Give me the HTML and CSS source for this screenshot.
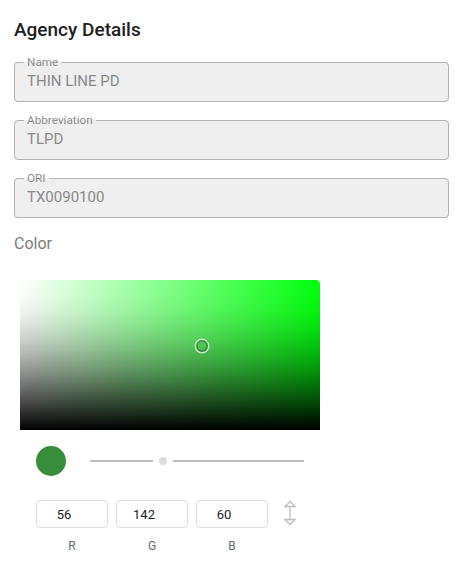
FILE: index.html
```html
<!DOCTYPE html>
<html lang="en">
<head>
<meta charset="utf-8">
<title>Agency Details</title>
<link rel="stylesheet" href="styles.css">
</head>
<body>
<div class="page">
  <h2 class="title">Agency Details</h2>

  <fieldset class="field">
    <legend class="field-label">Name</legend>
    <div class="field-value">THIN LINE PD</div>
  </fieldset>
  <fieldset class="field">
    <legend class="field-label">Abbreviation</legend>
    <div class="field-value">TLPD</div>
  </fieldset>
  <fieldset class="field">
    <legend class="field-label">ORI</legend>
    <div class="field-value">TX0090100</div>
  </fieldset>

  <div class="color-label">Color</div>

  <div class="picker">
    <div class="canvas">
      <span class="canvas-dot" style="left:60.6%;top:44.3%"></span>
    </div>
    <div class="controls">
      <div class="preview-row">
        <span class="swatch"></span>
        <div class="hue-slider">
          <span class="track track-left"></span>
          <span class="thumb"></span>
          <span class="track track-right"></span>
        </div>
      </div>
      <div class="edit-row">
        <div class="channel">
          <div class="channel-input">56</div>
          <span class="channel-name">R</span>
        </div>
        <div class="channel">
          <div class="channel-input">142</div>
          <span class="channel-name">G</span>
        </div>
        <div class="channel">
          <div class="channel-input">60</div>
          <span class="channel-name">B</span>
        </div>
        <svg class="mode-icon" width="12" height="26" viewBox="0 0 12 26" aria-hidden="true">
          <path d="M6 1.5 L11 6.5 L1 6.5 Z" fill="none" stroke="#bdbdbd" stroke-width="1.3" stroke-linejoin="miter"/>
          <path d="M6 6.5 V19.5" stroke="#bdbdbd" stroke-width="1.3"/>
          <path d="M1 19.5 L11 19.5 L6 24.5 Z" fill="none" stroke="#bdbdbd" stroke-width="1.3" stroke-linejoin="miter"/>
        </svg>
      </div>
    </div>
  </div>
</div>
</body>
</html>
```

FILE: styles.css
```css
* { box-sizing: border-box; }

html, body {
  margin: 0;
  background: #ffffff;
}

body {
  font-family: Roboto, "Liberation Sans", Arial, sans-serif;
  color: rgba(0, 0, 0, 0.87);
}

.page {
  padding: 18px 15px 0 14px;
}

.title {
  margin: 0;
  font-size: 19px;
  line-height: 24px;
  font-weight: 500;
  color: #212121;
}

.field {
  margin: 14px 0 0;
  padding: 3px 12px 10px;
  border: 1px solid #b3b3b3;
  border-radius: 4px;
  background: #efefef;
  min-width: 0;
}

.field + .field {
  margin-top: 12px;
}

.field-label {
  margin-left: -3px;
  padding: 0 3px;
  font-size: 11.75px;
  line-height: 12px;
  color: #8d8d8d;
}

.field-value {
  font-size: 15px;
  line-height: 20px;
  color: #8a8a8a;
}

.color-label {
  margin-top: 16px;
  font-size: 16px;
  line-height: 20px;
  color: #7a7a7a;
}

.picker {
  margin: 26px 0 0 6px;
  width: 300px;
}

.canvas {
  position: relative;
  width: 300px;
  height: 150px;
  border-radius: 4px 4px 0 0;
  background:
    linear-gradient(to bottom,
      rgba(0, 0, 0, 0) 0%,
      rgba(0, 0, 0, 0.012) 10%,
      rgba(0, 0, 0, 0.049) 20%,
      rgba(0, 0, 0, 0.109) 30%,
      rgba(0, 0, 0, 0.191) 40%,
      rgba(0, 0, 0, 0.293) 50%,
      rgba(0, 0, 0, 0.412) 60%,
      rgba(0, 0, 0, 0.546) 70%,
      rgba(0, 0, 0, 0.691) 80%,
      rgba(0, 0, 0, 0.844) 90%,
      #000000 100%),
    linear-gradient(to right, #ffffff, rgb(0, 255, 12));
}

.canvas-dot {
  position: absolute;
  width: 12px;
  height: 12px;
  margin: -6px 0 0 -6px;
  border-radius: 50%;
  box-shadow: 0 0 0 1.5px rgba(255, 255, 255, 0.7), inset 0 0 1px 1.5px rgba(0, 0, 0, 0.3);
}

.controls {
  padding: 16px;
}

.preview-row {
  display: flex;
  align-items: center;
  gap: 24px;
}

.swatch {
  flex: none;
  width: 30px;
  height: 30px;
  border-radius: 50%;
  background: rgb(56, 142, 60);
}

.hue-slider {
  flex: 1;
  display: flex;
  align-items: center;
  height: 30px;
}

.track {
  height: 2px;
  background: #bdbdbd;
}

.track-left {
  width: 63px;
}

.track-right {
  flex: 1;
}

.thumb {
  width: 8px;
  height: 8px;
  margin: 0 6px;
  border-radius: 50%;
  background: #dcdcdc;
}

.edit-row {
  display: flex;
  align-items: flex-start;
  gap: 8px;
  margin-top: 24px;
}

.channel {
  display: flex;
  flex-direction: column;
  align-items: center;
  width: 72px;
}

.channel-input {
  width: 72px;
  height: 28px;
  border: 1px solid #dddddd;
  border-radius: 4px;
  padding-right: 16px;
  text-align: center;
  font-size: 13px;
  line-height: 28px;
  color: #212121;
}

.channel-name {
  margin-top: 10px;
  font-size: 12px;
  line-height: 16px;
  color: #5f6b78;
}

.mode-icon {
  margin: 0 0 0 8px;
  flex: none;
}
```
